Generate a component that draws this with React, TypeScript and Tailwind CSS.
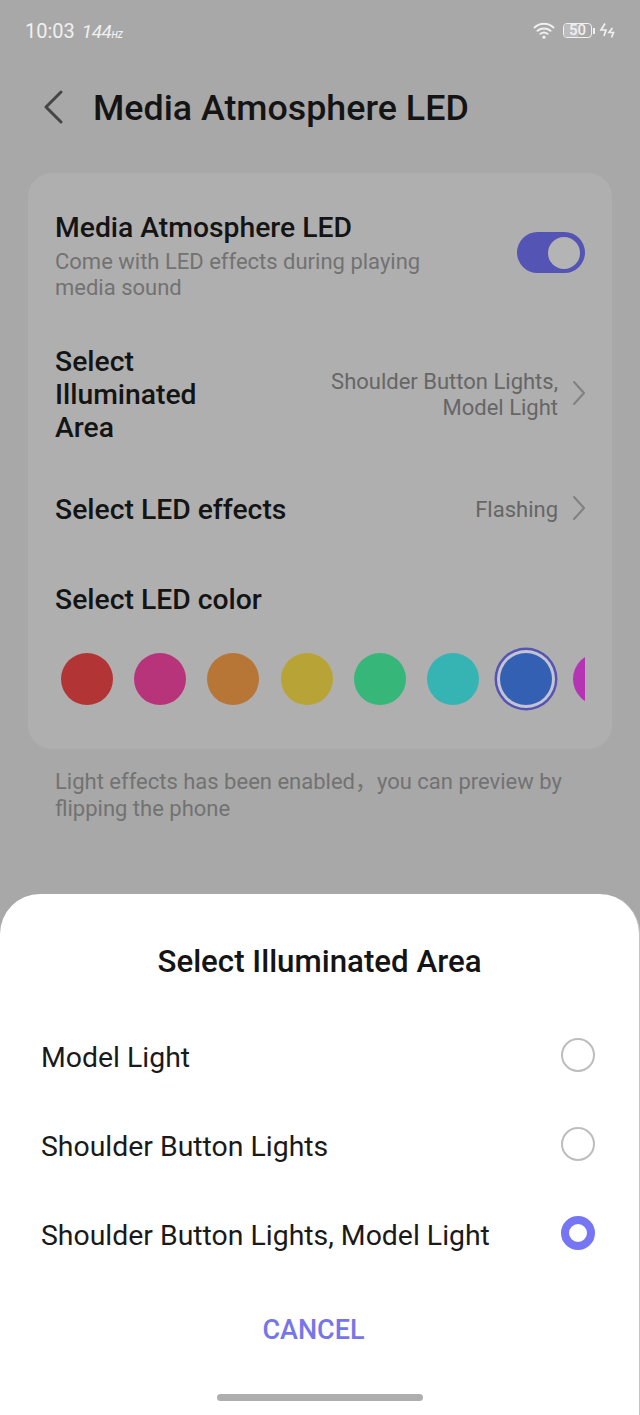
import React from 'react';

const colors = ['#b23434', '#b8347a', '#b87636', '#b8a436', '#36b678', '#36b4b4', '#3460b4'];

const options = [
  { label: 'Model Light', selected: false },
  { label: 'Shoulder Button Lights', selected: false },
  { label: 'Shoulder Button Lights, Model Light', selected: true },
];

const StatusBar: React.FC = () => (
  <div className="flex items-center justify-between h-[60px] pl-[25px] pr-[25px] pt-[1px] text-[#f0f0f0]">
    <div className="flex items-baseline">
      <span className="text-[20px] leading-none">10:03</span>
      <span className="ml-[7px] text-[19px] leading-none italic tracking-[-0.5px]">144</span>
      <span className="text-[9px] leading-none italic font-medium">HZ</span>
    </div>
    <div className="flex items-center">
      <svg width="22" height="17" viewBox="0 0 22 17" fill="none" stroke="#f0f0f0" strokeWidth="2" strokeLinecap="round">
        <path d="M1.5 5.5 C7 0.5 15 0.5 20.5 5.5" />
        <path d="M4.5 8.8 C8 5.8 14 5.8 17.5 8.8" />
        <path d="M7.5 11.8 C9.5 10.3 12.5 10.3 14.5 11.8" />
        <circle cx="11" cy="15.2" r="1.6" fill="#f0f0f0" stroke="none" />
      </svg>
      <div className="ml-[8px] relative flex items-center justify-center w-[29px] h-[15px] rounded-[4px] border border-[#f0f0f0] text-[15px] leading-none font-medium">
        <div className="absolute left-0 top-0 bottom-0 w-[14px] bg-[#bcbcbc] rounded-l-[3px]" />
        <span className="relative">50</span>
      </div>
      <div className="ml-[1px] w-[2px] h-[6px] bg-[#f0f0f0]" />
      <svg className="ml-[4px]" width="16" height="15" viewBox="0 0 16 15" fill="none" stroke="#f0f0f0" strokeWidth="1.7">
        <path d="M6 0.5 L2 7 H7 L5 13" />
        <path d="M13.5 5 L10 9.5 H14.5 L12.5 14.5" />
      </svg>
    </div>
  </div>
);

const Chevron: React.FC = () => (
  <svg className="ml-[14px] -mr-[1px] -mt-[4px] shrink-0" width="14" height="26" viewBox="0 0 14 26" fill="none" stroke="#808080" strokeWidth="2">
    <path d="M2 2 L12 13 L2 24" strokeLinecap="round" strokeLinejoin="round" />
  </svg>
);

const App: React.FC = () => {
  return (
    <div className="relative w-[640px] h-[1415px] overflow-hidden bg-[#a8a8a8] font-['Roboto','Noto_Sans_CJK_SC',sans-serif]">
      <StatusBar />

      <header className="flex items-center h-[96px] pl-[40px] -mt-[1px]">
        <svg width="26" height="36" viewBox="0 0 26 36" fill="none" stroke="#454545" strokeWidth="3">
          <path d="M21 3 L6 18 L21 33" strokeLinecap="round" strokeLinejoin="round" />
        </svg>
        <h1 className="ml-[27px] mt-[3px] text-[35.8px] leading-none font-medium text-[#141414]">Media Atmosphere LED</h1>
      </header>

      <section className="mx-[28px] mt-[18px] h-[576px] rounded-[24px] bg-[#afafaf] px-[27px] pt-[37px]">
        <div className="flex items-center justify-between">
          <div className="w-[400px]">
            <div className="text-[28.3px] leading-[36px] font-medium text-[#141414]">Media Atmosphere LED</div>
            <p className="text-[22px] leading-[26px] text-[#727272] mt-[3px]">Come with LED effects during playing media sound</p>
          </div>
          <div className="flex items-center justify-end w-[68px] h-[41px] rounded-full bg-[#5454b4] pr-[5px] -mt-[6px]">
            <div className="w-[32px] h-[32px] rounded-full bg-[#b4b4b4]" />
          </div>
        </div>

        <div className="flex items-center justify-between mt-[45px]">
          <div className="w-[170px] -mt-[1px] text-[28.3px] leading-[33.2px] font-medium text-[#141414]">Select Illuminated Area</div>
          <div className="flex items-center">
            <div className="text-right text-[22px] leading-[26px] text-[#666666]">
              Shoulder Button Lights,
              <br />
              Model Light
            </div>
            <Chevron />
          </div>
        </div>

        <div className="flex items-center justify-between mt-[47px]">
          <div className="text-[28.3px] leading-[36px] font-medium text-[#141414]">Select LED effects</div>
          <div className="flex items-center">
            <span className="text-[22px] leading-[26px] text-[#666666]">Flashing</span>
            <Chevron />
          </div>
        </div>

        <div className="text-[28.3px] leading-[36px] font-medium text-[#141414] mt-[54px]">Select LED color</div>

        <div className="flex items-center overflow-hidden gap-[21.2px] mt-[28px] pl-[6px] h-[66px]">
          {colors.map((c, i) => (
            <div
              key={c}
              className={
                i === colors.length - 1
                  ? 'shrink-0 w-[52px] h-[52px] rounded-full shadow-[0_0_0_3px_#c4c4d2,0_0_0_5.5px_#5454b4]'
                  : 'shrink-0 w-[52px] h-[52px] rounded-full'
              }
              style={{ backgroundColor: c }}
            />
          ))}
          <div className="shrink-0 w-[52px] h-[52px] rounded-full bg-[#b434b4]" />
        </div>
      </section>

      <p className="mx-[55px] mt-[19px] text-[22px] leading-[27px] text-[#727272]">
        Light effects has been enabled，you can preview by flipping the phone
      </p>

      {/* bottom sheet */}
      <div className="absolute left-0 right-0 bottom-0 h-[521px] rounded-t-[40px] bg-white border-r border-[#c4c4c4]">
        <h2 className="pt-[49px] text-center text-[31.25px] leading-[38px] font-medium text-[#141414]">Select Illuminated Area</h2>
        <ul className="mt-[33px] pl-[41px] pr-[44px]">
          {options.map((o) => (
            <li key={o.label} className="flex items-center justify-between h-[89px]">
              <span className="text-[28.4px] text-[#1a1a1a]">{o.label}</span>
              {o.selected ? (
                <span className="w-[34px] h-[34px] rounded-full border-[8px] border-[#7676f4] -mt-[8px]" />
              ) : (
                <span className="w-[34px] h-[34px] rounded-full border-[2.5px] border-[#bdbdbd] -mt-[8px]" />
              )}
            </li>
          ))}
        </ul>
        <div className="mt-[31px] pr-[12px] text-center text-[27px] leading-[36px] font-medium text-[#7676e8]">CANCEL</div>
        <div className="mx-auto mt-[46px] w-[206px] h-[7px] rounded-full bg-[#aeaeae]" />
      </div>
    </div>
  );
};

export default App;
